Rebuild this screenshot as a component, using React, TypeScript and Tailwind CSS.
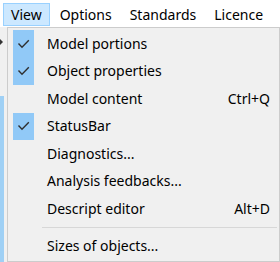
import { useState } from 'react';

interface MenuItem {
  label: string;
  shortcut?: string;
  checked?: boolean;
}

const barItems = ['View', 'Options', 'Standards', 'Licence'];

const viewItems: MenuItem[] = [
  { label: 'Model portions', checked: true },
  { label: 'Object properties', checked: true },
  { label: 'Model content', shortcut: 'Ctrl+Q' },
  { label: 'StatusBar', checked: true },
  { label: 'Diagnostics...' },
  { label: 'Analysis feedbacks...' },
  { label: 'Descript editor', shortcut: 'Alt+D' },
];

function CheckMark() {
  return (
    <svg width="13" height="10" viewBox="0 0 13 10" fill="none">
      <path d="M1.5 4.6 L5 8.2 L11.8 1.3" stroke="#2f2f2f" strokeWidth="1.4" />
    </svg>
  );
}

function Row({ item }: { item: MenuItem }) {
  return (
    <div className="h-[27.5px] flex items-center pl-[5px] pr-[9px]">
      <div
        className={`w-[21px] h-full flex items-center justify-center ${
          item.checked ? 'bg-[#91c9f7]' : ''
        }`}
      >
        {item.checked && <CheckMark />}
      </div>
      <span className="ml-[13px] flex-1 leading-[20px]">{item.label}</span>
      {item.shortcut && <span className="leading-[20px]">{item.shortcut}</span>}
    </div>
  );
}

export default function App() {
  const [active] = useState('View');

  return (
    <div className="w-[280px] h-[262px] flex flex-col bg-white text-black text-[14px] font-['Noto_Sans',sans-serif] overflow-hidden">
      <div className="h-[27px] flex items-start pt-[3px] pl-[3px] gap-[2px]">
        {barItems.map((name) => (
          <div
            key={name}
            className={`h-[23px] px-[7px] flex items-center border leading-[20px] ${
              name === active ? 'bg-[#cce8ff] border-[#99d1ff]' : 'border-transparent'
            }`}
          >
            {name}
          </div>
        ))}
      </div>

      <div className="flex flex-1 min-h-0">
        {/* bit of the window behind the menu */}
        <div className="w-[7px] flex flex-col bg-[#f0f0f0] overflow-hidden">
          <div className="h-[12px]" />
          <svg width="3" height="6" viewBox="0 0 3 6">
            <path d="M0 0 L3 3 L0 6 Z" fill="#333333" />
          </svg>
          <div className="h-[51px]" />
          <div className="flex-1 w-[4px] bg-[#9fd0f5]" />
        </div>

        <div className="flex-1 flex flex-col bg-[#f0f0f0] border border-[#cccccc] pt-[2px] pb-[1px]">
          {viewItems.map((item) => (
            <Row key={item.label} item={item} />
          ))}
          <div className="h-[10px] flex items-center pl-[34px] pr-[2px]">
            <div className="h-px flex-1 bg-[#d7d7d7]" />
          </div>
          <Row item={{ label: 'Sizes of objects...' }} />
        </div>
      </div>
    </div>
  );
}
